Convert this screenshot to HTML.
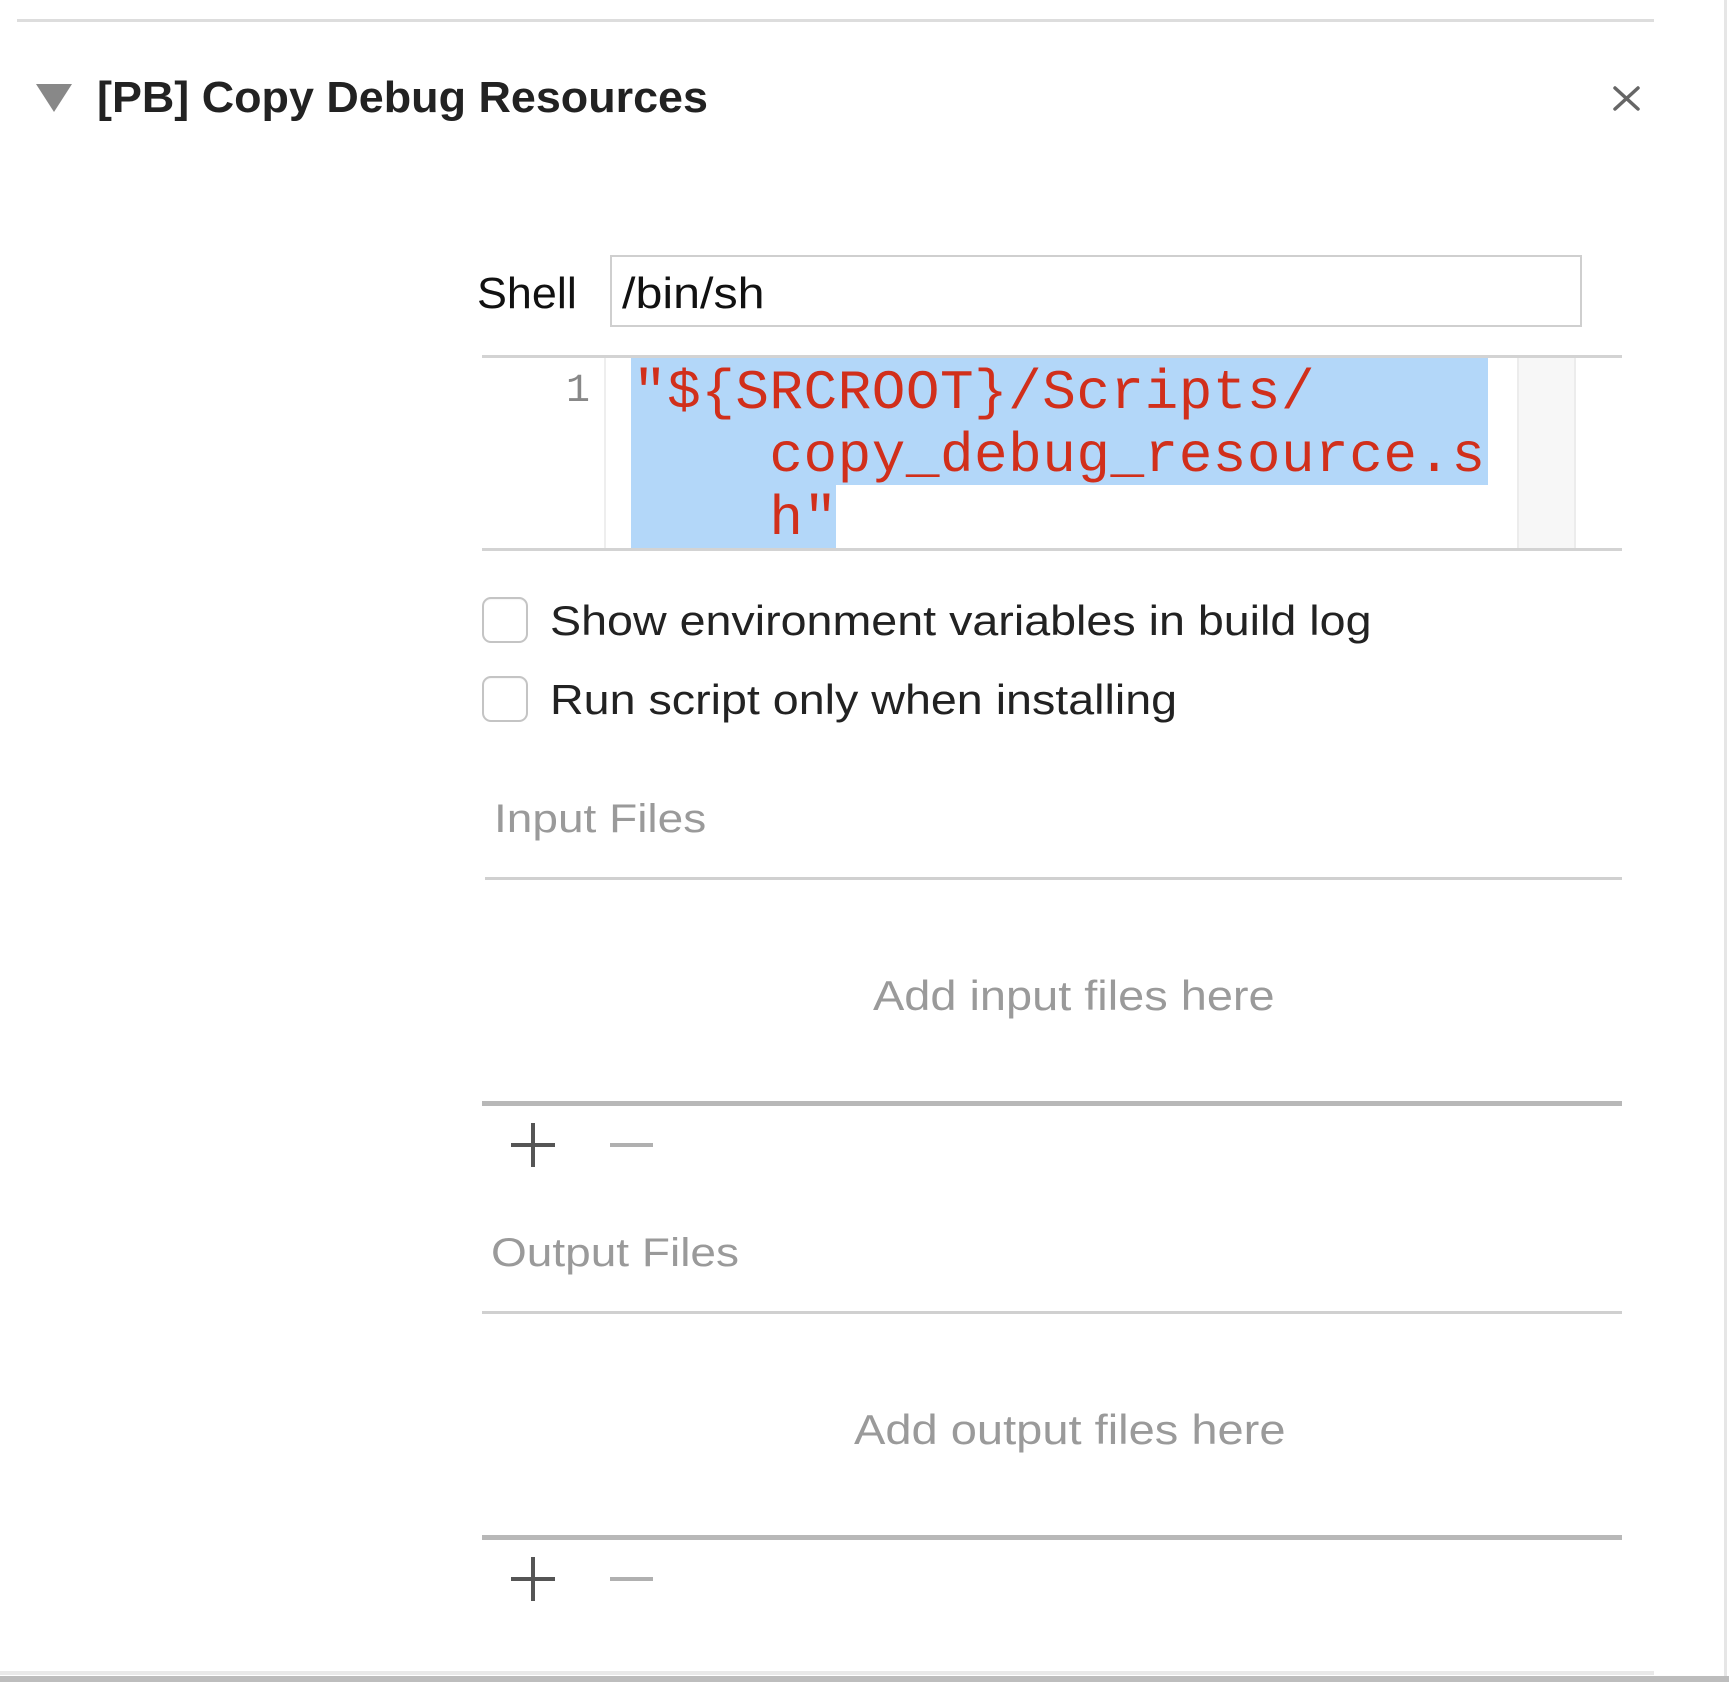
<!DOCTYPE html>
<html><head><meta charset="utf-8"><style>
html,body{margin:0;padding:0;width:1729px;height:1682px;background:#fff;overflow:hidden;position:relative;font-family:"Liberation Sans",Helvetica,Arial,sans-serif;}
.a{position:absolute;}
.t{position:absolute;white-space:nowrap;line-height:1;transform-origin:left;}
.code{font-family:"Liberation Mono",monospace;color:#d12f1b;font-size:56px;line-height:63px;letter-spacing:0.5px;}
.cb{position:absolute;left:482px;width:42px;height:42px;border:2px solid #c4c4c4;border-radius:9px;background:#fff;box-shadow:inset 0 1px 1px rgba(0,0,0,.04);}
</style></head><body>
<div class="a" style="left:17px;top:19px;width:1637px;height:3px;background:#ddd"></div>
<div class="a" style="left:1724px;top:0;width:3px;height:1682px;background:#e6e6e6"></div>
<div class="a" style="left:0;top:1676px;width:1729px;height:6px;background:#bdbdbd"></div>
<div class="a" style="left:0;top:1671px;width:1654px;height:4px;background:#e9e9e9"></div>

<svg class="a" style="left:36px;top:84px" width="36" height="28"><polygon points="0,0 36,0 18,28" fill="#888"/></svg>
<div class="t" style="left:97px;top:76px;font-size:44px;font-weight:bold;color:#222;transform:scaleX(1.02)">[PB] Copy Debug Resources</div>
<svg class="a" style="left:1613px;top:86px" width="27" height="25"><path d="M2 2L25 23M25 2L2 23" stroke="#666" stroke-width="3.5" stroke-linecap="round"/></svg>

<div class="t" style="left:477px;top:272px;font-size:44px;color:#111;transform:scaleX(1.02)">Shell</div>
<div class="a" style="left:610px;top:255px;width:968px;height:68px;border:2px solid #cfcfcf;background:#fff"></div>
<div class="t" style="left:622px;top:272px;font-size:44px;color:#111;transform:scaleX(1.1)">/bin/sh</div>

<div class="a" style="left:482px;top:355px;width:1140px;height:3px;background:#d3d3d3"></div>
<div class="a" style="left:482px;top:548px;width:1140px;height:3px;background:#d3d3d3"></div>
<div class="a" style="left:604px;top:358px;width:2px;height:190px;background:#eee"></div>
<div class="a" style="left:1517px;top:358px;width:55px;height:190px;background:#f7f7f7;border-left:2px solid #ececec;border-right:2px solid #ececec"></div>
<div class="a" style="left:631px;top:358px;width:857px;height:127px;background:#b3d7f9"></div>
<div class="a" style="left:631px;top:485px;width:205px;height:63px;background:#b3d7f9"></div>
<div class="t" style="left:566px;top:372px;font-size:40px;color:#888;font-family:'Liberation Mono',monospace">1</div>
<div class="a code" style="left:633px;top:362px;white-space:pre">"${SRCROOT}/Scripts/
    copy_debug_resource.s
    h"</div>

<div class="cb" style="top:597px"></div>
<div class="cb" style="top:676px"></div>
<div class="t" style="left:550px;top:600px;font-size:42px;color:#222;transform:scaleX(1.11)">Show environment variables in build log</div>
<div class="t" style="left:550px;top:679px;font-size:42px;color:#222;transform:scaleX(1.11)">Run script only when installing</div>

<div class="t" style="left:494px;top:799px;font-size:40px;color:#9a9a9a;transform:scaleX(1.15)">Input Files</div>
<div class="a" style="left:485px;top:877px;width:1137px;height:3px;background:#d0d0d0"></div>
<div class="t" style="left:873px;top:975px;font-size:42px;color:#9a9a9a;transform:scaleX(1.117)">Add input files here</div>
<div class="a" style="left:482px;top:1101px;width:1140px;height:5px;background:#b8b8b8"></div>
<svg class="a" style="left:510px;top:1122px" width="46" height="46"><path d="M23 1V45M1 23H45" stroke="#555" stroke-width="4"/></svg>
<div class="a" style="left:610px;top:1143px;width:43px;height:4px;background:#b0b0b0"></div>

<div class="t" style="left:491px;top:1233px;font-size:40px;color:#9a9a9a;transform:scaleX(1.15)">Output Files</div>
<div class="a" style="left:482px;top:1311px;width:1140px;height:3px;background:#d0d0d0"></div>
<div class="t" style="left:854px;top:1409px;font-size:42px;color:#9a9a9a;transform:scaleX(1.12)">Add output files here</div>
<div class="a" style="left:482px;top:1535px;width:1140px;height:5px;background:#b8b8b8"></div>
<svg class="a" style="left:510px;top:1556px" width="46" height="46"><path d="M23 1V45M1 23H45" stroke="#555" stroke-width="4"/></svg>
<div class="a" style="left:610px;top:1577px;width:43px;height:4px;background:#b0b0b0"></div>
</body></html>
